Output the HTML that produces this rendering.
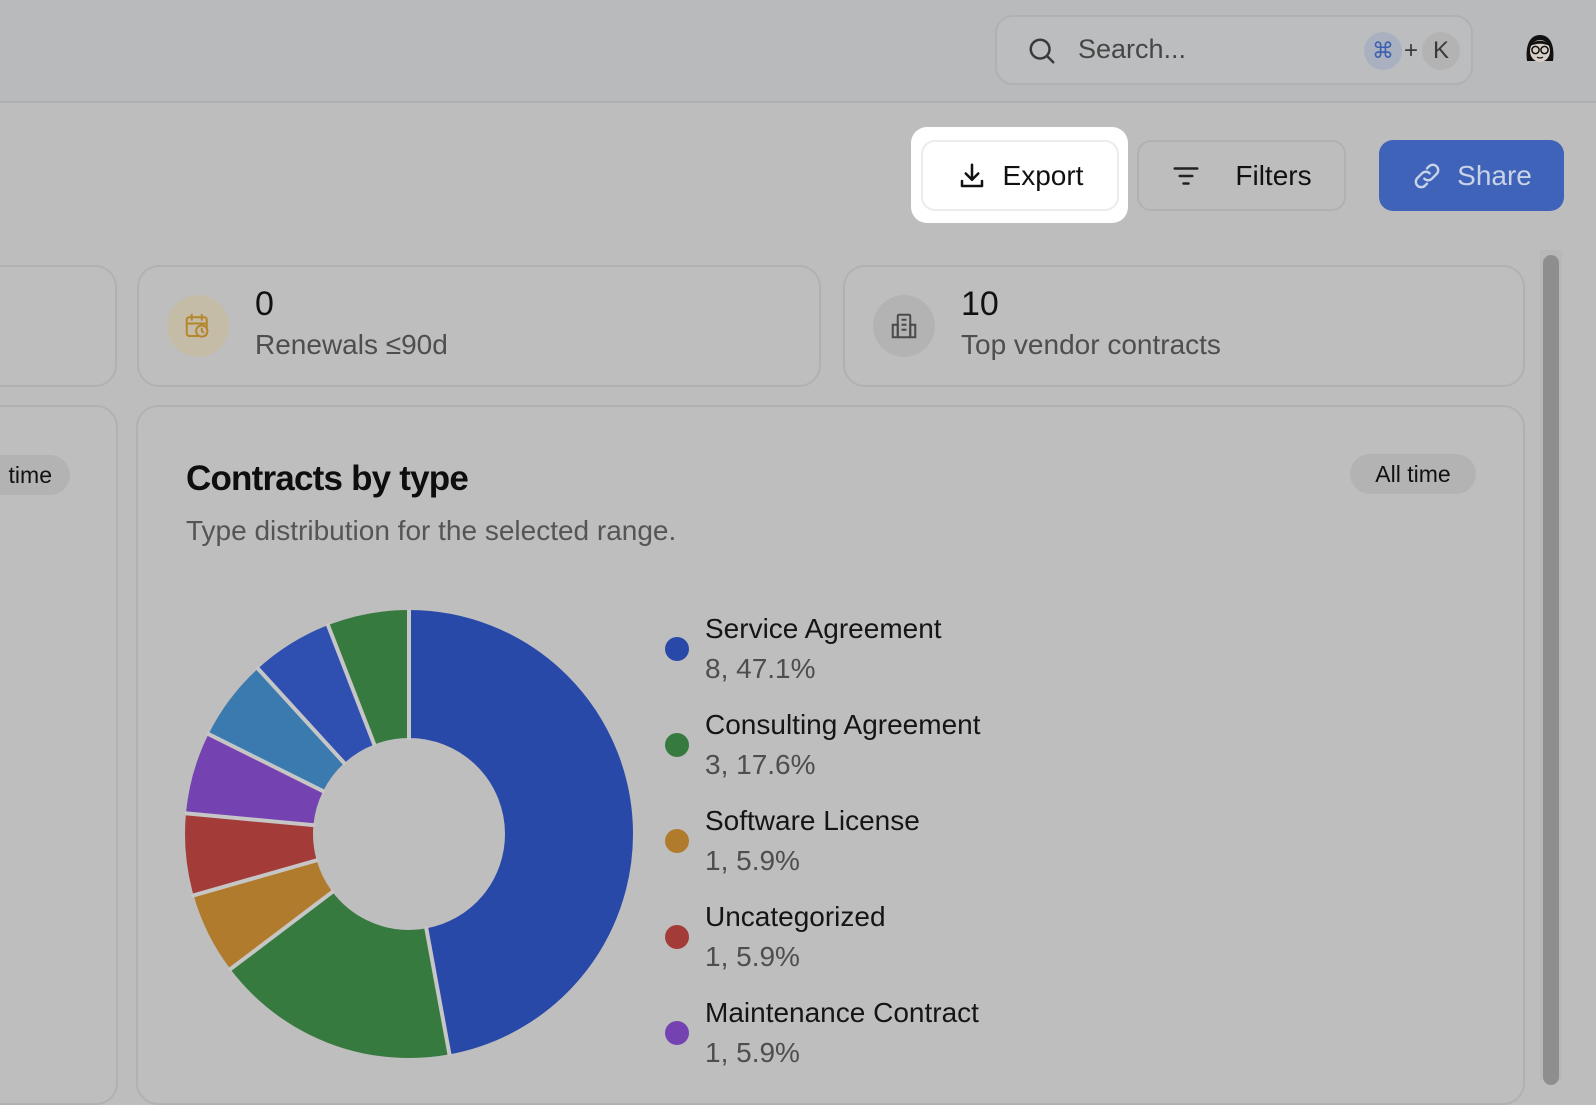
<!DOCTYPE html>
<html><head><meta charset="utf-8"><style>
*{box-sizing:border-box;margin:0;padding:0}
body{width:1596px;height:1068px;overflow:hidden;background:#bdbdbd;font-family:"Liberation Sans",sans-serif;position:relative}
.abs{position:absolute}
.hdr{left:0;top:0;width:1596px;height:103px;background:#b9babb;border-bottom:2px solid #aeafb0}
.search{left:995px;top:15px;width:478px;height:70px;border:2px solid #b0b1b3;border-radius:18px;background:#bcbdbe}
.btn{border-radius:14px;display:flex;align-items:center;justify-content:center;font-size:28px}
.card{border:2px solid #b1b1b1;border-radius:22px;background:#bebebe}
.lg{position:absolute;left:677px;font-size:28px;color:#151515}
.lg .d{position:absolute;left:-12px;top:24px;width:24px;height:24px;border-radius:50%}
.lg .t{position:absolute;left:28px;top:0;white-space:nowrap}
.lg .s{position:absolute;left:28px;top:40px;color:#4e4e4e;white-space:nowrap}
</style></head><body>
<div class="abs hdr"></div>
<div class="abs search">
<svg class="abs" style="left:30px;top:19px" width="30" height="30" viewBox="0 0 24 24" fill="none" stroke="#3a3a3a" stroke-width="2" stroke-linecap="round"><circle cx="10.5" cy="10.5" r="7.5"/><path d="M16 16l5 5"/></svg>
<div class="abs" style="left:81px;top:17px;font-size:27px;color:#464646">Search...</div>
<div class="abs" style="left:367px;top:15px;width:38px;height:38px;border-radius:19px;background:#a9b1c0;color:#3d5fb2;font-size:22px;text-align:center;line-height:38px">⌘</div>
<div class="abs" style="left:407px;top:20px;font-size:24px;color:#3a3a3a">+</div>
<div class="abs" style="left:425px;top:15px;width:38px;height:38px;border-radius:19px;background:#b3b3b3;color:#3a3a3a;font-size:24px;text-align:center;line-height:38px">K</div>
</div>
<svg class="abs" style="left:1522px;top:31px" width="36" height="36" viewBox="0 0 36 36"><path d="M5 30 C3 14 8 4 18 4 C28 4 33 14 31 30 Z" fill="#111"/><ellipse cx="18" cy="20" rx="10" ry="11" fill="#d8d0c8"/><path d="M8 15 C12 8 24 8 28 15 C22 12 14 12 8 15Z" fill="#111"/><circle cx="13.5" cy="19" r="3.6" fill="none" stroke="#111" stroke-width="1.5"/><circle cx="22.5" cy="19" r="3.6" fill="none" stroke="#111" stroke-width="1.5"/><path d="M15 26 Q18 28 21 26" stroke="#111" fill="none" stroke-width="1.3"/></svg>

<div class="abs" style="left:911px;top:127px;width:217px;height:96px;background:#fff;border-radius:16px"></div>
<div class="abs btn" style="left:921px;top:140px;width:198px;height:71px;background:#fff;border:2px solid #ececec;color:#111">
<svg width="30" height="30" viewBox="0 0 24 24" fill="none" stroke="#111" stroke-width="2" stroke-linecap="round" stroke-linejoin="round" style="margin-right:16px"><path d="M12 3v12M7 10l5 5 5-5M4 16v4h16v-4"/></svg>Export</div>
<div class="abs btn" style="left:1137px;top:140px;width:209px;height:71px;border:2px solid #b1b1b1;color:#111">
<svg width="30" height="30" viewBox="0 0 24 24" fill="none" stroke="#222" stroke-width="2" stroke-linecap="round" style="margin-right:34px"><path d="M3 6h18M7 12h10M10 18h4"/></svg>Filters</div>
<div class="abs btn" style="left:1379px;top:140px;width:185px;height:71px;background:#3e63b9;color:#c9d2e6">
<svg width="32" height="32" viewBox="0 0 24 24" fill="none" stroke="#c9d2e6" stroke-width="1.8" stroke-linecap="round" style="margin-right:14px"><path d="M10 14a4 4 0 0 0 5.7 0l3.5-3.5a4 4 0 0 0-5.7-5.7L12 6.3"/><path d="M14 10a4 4 0 0 0-5.7 0l-3.5 3.5a4 4 0 0 0 5.7 5.7l1.5-1.5"/></svg>Share</div>

<div class="abs card" style="left:-30px;top:265px;width:147px;height:122px"></div>
<div class="abs card" style="left:137px;top:265px;width:684px;height:122px">
<div class="abs" style="left:28px;top:28px;width:62px;height:62px;border-radius:50%;background:#c5bca8"></div>
<svg class="abs" style="left:44px;top:44px" width="30" height="30" viewBox="0 0 24 24" fill="none" stroke="#b4872d" stroke-width="1.6" stroke-linecap="round"><rect x="3" y="5" width="16" height="15" rx="2"/><path d="M7 3v4M15 3v4M3 10h16"/><circle cx="15" cy="16" r="4.5" fill="#c5bca8"/><path d="M15 14v2l1.3 1"/></svg>
<div class="abs" style="left:116px;top:18px;font-size:34px;color:#111">0</div>
<div class="abs" style="left:116px;top:62px;font-size:28px;color:#4e4e4e">Renewals ≤90d</div>
</div>
<div class="abs card" style="left:843px;top:265px;width:682px;height:122px">
<div class="abs" style="left:28px;top:28px;width:62px;height:62px;border-radius:50%;background:#b3b3b3"></div>
<svg class="abs" style="left:44px;top:44px" width="30" height="30" viewBox="0 0 24 24" fill="none" stroke="#4a4a4a" stroke-width="1.6"><rect x="7" y="3" width="10" height="18" rx="1"/><path d="M3 11h4v10H3zM17 11h4v10h-4zM10 7h4M10 11h4M10 15h4"/></svg>
<div class="abs" style="left:116px;top:18px;font-size:34px;color:#111">10</div>
<div class="abs" style="left:116px;top:62px;font-size:28px;color:#4e4e4e">Top vendor contracts</div>
</div>

<div class="abs card" style="left:-30px;top:405px;width:148px;height:700px">
<div class="abs" style="left:-10px;top:48px;width:108px;height:40px;border-radius:20px;background:#b3b3b3;font-size:23px;color:#111;line-height:40px;text-align:right;padding-right:18px">time</div>
</div>
<div class="abs card" style="left:136px;top:405px;width:1389px;height:700px">
<div class="abs" style="left:48px;top:52px;font-size:35px;color:#0e0e0e;letter-spacing:-0.8px;font-weight:bold">Contracts by type</div>
<div class="abs" style="left:48px;top:108px;font-size:28px;color:#555">Type distribution for the selected range.</div>
<div class="abs" style="left:1212px;top:47px;width:126px;height:40px;border-radius:20px;background:#b3b3b3;font-size:23px;color:#111;line-height:40px;text-align:center">All time</div>
</div>

<svg class="abs" style="left:185px;top:610px" width="448" height="448" viewBox="-224 -224 448 448">
<g transform="rotate(-90)" fill="none" stroke-width="128">
<circle r="160" stroke="#2949a9" stroke-dasharray="473.5 1005.3" stroke-dashoffset="0"/>
<circle r="160" stroke="#377a3f" stroke-dasharray="176.9 1005.3" stroke-dashoffset="-473.5"/>
<circle r="160" stroke="#b07b2c" stroke-dasharray="59.3 1005.3" stroke-dashoffset="-650.4"/>
<circle r="160" stroke="#a33b38" stroke-dasharray="59.3 1005.3" stroke-dashoffset="-709.7"/>
<circle r="160" stroke="#7543b1" stroke-dasharray="59.3 1005.3" stroke-dashoffset="-769.0"/>
<circle r="160" stroke="#3b7aae" stroke-dasharray="59.3 1005.3" stroke-dashoffset="-828.3"/>
<circle r="160" stroke="#2f4fb1" stroke-dasharray="59.3 1005.3" stroke-dashoffset="-887.6"/>
<circle r="160" stroke="#377a3f" stroke-dasharray="58.4 1005.3" stroke-dashoffset="-946.9"/>
</g>
<g stroke="#c6c6c6" stroke-width="4">
<line x1="0" y1="-94" x2="0" y2="-226" transform="rotate(0)"/>
<line x1="0" y1="-94" x2="0" y2="-226" transform="rotate(169.6)"/>
<line x1="0" y1="-94" x2="0" y2="-226" transform="rotate(232.9)"/>
<line x1="0" y1="-94" x2="0" y2="-226" transform="rotate(254.1)"/>
<line x1="0" y1="-94" x2="0" y2="-226" transform="rotate(275.3)"/>
<line x1="0" y1="-94" x2="0" y2="-226" transform="rotate(296.5)"/>
<line x1="0" y1="-94" x2="0" y2="-226" transform="rotate(317.6)"/>
<line x1="0" y1="-94" x2="0" y2="-226" transform="rotate(338.8)"/>
</g>
</svg>

<div class="lg" style="top:613px"><div class="d" style="background:#2949a9"></div><div class="t">Service Agreement</div><div class="s">8, 47.1%</div></div>
<div class="lg" style="top:709px"><div class="d" style="background:#377a3f"></div><div class="t">Consulting Agreement</div><div class="s">3, 17.6%</div></div>
<div class="lg" style="top:805px"><div class="d" style="background:#b07b2c"></div><div class="t">Software License</div><div class="s">1, 5.9%</div></div>
<div class="lg" style="top:901px"><div class="d" style="background:#a33b38"></div><div class="t">Uncategorized</div><div class="s">1, 5.9%</div></div>
<div class="lg" style="top:997px"><div class="d" style="background:#7543b1"></div><div class="t">Maintenance Contract</div><div class="s">1, 5.9%</div></div>

<div class="abs" style="left:1540px;top:250px;width:22px;height:830px;background:#b8b8b8"></div>
<div class="abs" style="left:1543px;top:255px;width:16px;height:830px;border-radius:8px;background:#8e8e8e"></div>
</body></html>
